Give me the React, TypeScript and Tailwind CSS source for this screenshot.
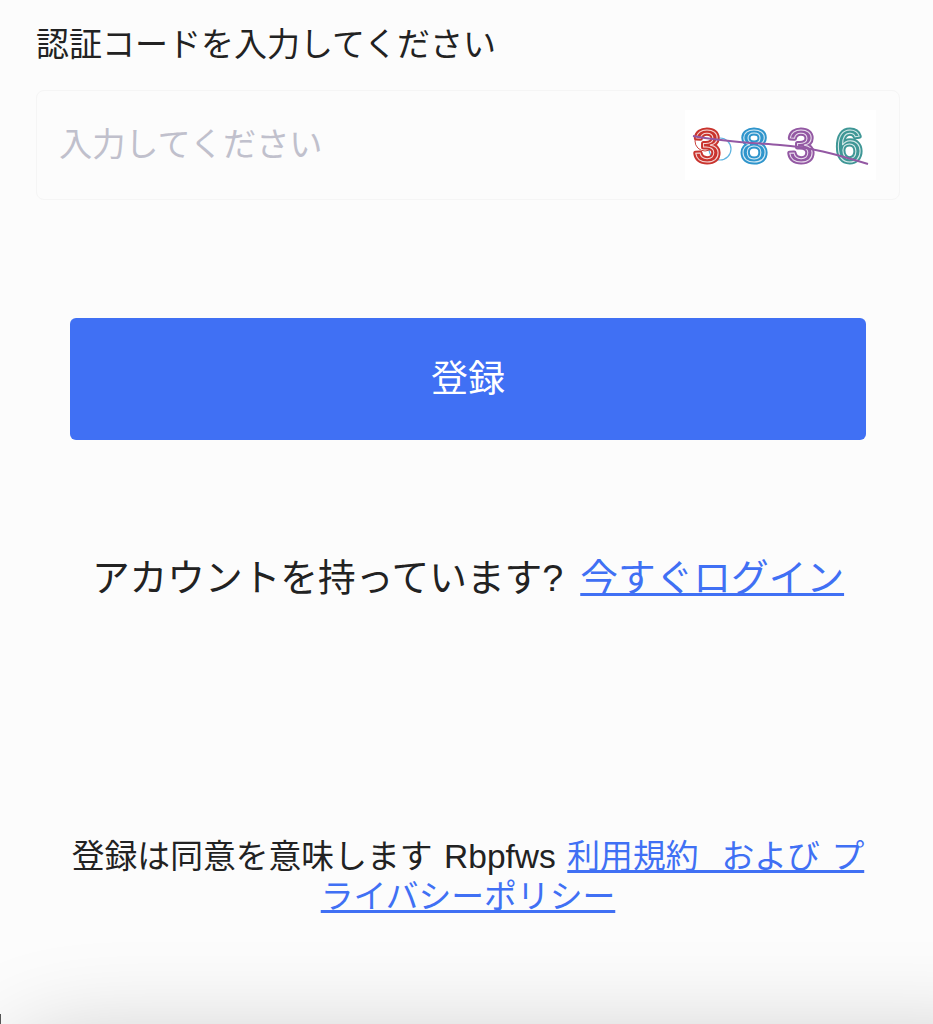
export default function App() {
  const font = "font-['Liberation_Sans','Noto_Sans_CJK_JP',sans-serif]";

  return (
    <div className={`relative h-[1024px] w-full overflow-hidden bg-[#fcfcfc] ${font}`}>
      <div className="pl-9 pr-[33px] pt-[25px]">
        <label className="block text-[33px] leading-10 text-[#222]">認証コードを入力してください</label>
        <div className="mt-[25px] flex h-[110px] items-center justify-between rounded-lg border border-[#f5f5f5] pl-[22px] pr-[23px]">
          <span className="text-[33.2px] leading-10 text-[#c0c0cc]">入力してください</span>
          <Captcha />
        </div>
      </div>

      <div className="mt-[118px] pl-[70px] pr-[67px]">
        <button className="flex h-[122px] w-full items-center justify-center rounded-md bg-[#4070f4] pt-[2px] text-[37px] text-white">
          登録
        </button>
      </div>

      <p className="mt-[116px] pl-[3px] text-center text-[37.7px] leading-[44px] text-[#222]">
        <span>アカウントを持っています?</span>
        <a className="ml-[17px] text-[#4070f4] underline">今すぐログイン</a>
      </p>

      <p className="mt-[237px] pl-[66px] pr-[63px] text-center text-[32.8px] leading-10 text-[#222] [word-spacing:2.4px]">
        登録は同意を意味します <span className="text-[33.5px]">Rbpfws</span> <a className="text-[#4070f4] underline">利用規約&nbsp;&nbsp;および プライバシーポリシー</a>
      </p>

      {/* shadow from the sheet below the fold */}
      <div className="pointer-events-none absolute left-0 right-[-80px] top-[1042px] h-40 rounded-tl-[70px] bg-[#ddd] shadow-[0_0_100px_rgba(0,0,0,0.22)]" />
      <div className="pointer-events-none absolute bottom-0 left-0 h-[10px] w-px bg-[#555]" />
    </div>
  );
}

function Captcha() {
  const digits = [
    { ch: "3", x: 22, color: "#c9342e" },
    { ch: "8", x: 69, color: "#2f95cc" },
    { ch: "3", x: 116, color: "#9358a3" },
    { ch: "6", x: 164, color: "#3f9796" },
  ];

  return (
    <svg width="191" height="70" viewBox="0 0 191 70" className="block bg-white">
      <g className="blur-[0.4px]">
        <circle cx="35" cy="39" r="11" fill="none" stroke="#5fb4e0" strokeWidth="1.2" />
        <circle cx="20" cy="31" r="10" fill="none" stroke="#c9413b" strokeWidth="1" />
        {digits.map((d, i) => (
          <g key={i} fontFamily="'Liberation Sans', sans-serif" fontSize="47" textAnchor="middle">
            <text x={d.x} y="52" fill={d.color} stroke={d.color} strokeWidth="5" strokeLinejoin="round">
              {d.ch}
            </text>
            <text x={d.x} y="52" fill="none" stroke="#fff" strokeOpacity="0.8" strokeWidth="1">
              {d.ch}
            </text>
          </g>
        ))}
        <path d="M8 26C40 32 70 33 95 35C125 37 150 44 183 54" fill="none" stroke="#9358a3" strokeWidth="2" />
      </g>
    </svg>
  );
}
